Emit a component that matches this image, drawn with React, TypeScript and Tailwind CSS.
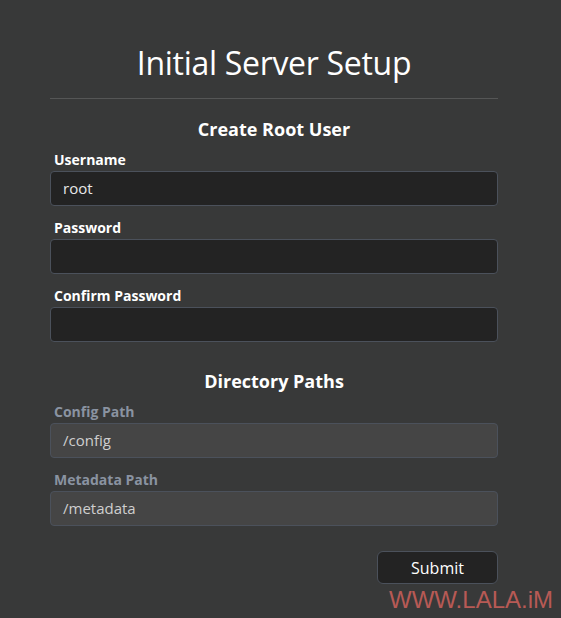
import React from 'react'

const font = { fontFamily: '"Open Sans", "Noto Sans", sans-serif' }

function Field({ label, value, muted }: { label: string; value?: string; muted?: boolean }) {
  return (
    <div className="flex flex-col">
      <label className={`pl-1 text-[14px] font-bold leading-[20px] ${muted ? 'text-[#8a93a1]' : 'text-white'}`}>
        {label}
      </label>
      <div
        className={`mt-[1px] h-[35px] rounded-[4px] border border-[#4b515b] px-3 flex items-center text-[15px] ${
          muted ? 'bg-[#454545] text-[#cfcfcf]' : 'bg-[#232323] text-[#e8e8e8]'
        }`}
      >
        {value}
      </div>
    </div>
  )
}

export default function App() {
  return (
    <div className="relative min-h-[618px] w-full bg-[#383939] text-white" style={font}>
      <div className="ml-[50px] w-[448px] pt-[40px]">
        <h1 className="text-center text-[32px] leading-[46px] tracking-[-0.3px]">Initial Server Setup</h1>
        <div className="mt-[12px] h-px bg-[#555656]" />

        <h2 className="mt-[18px] text-center text-[18px] font-bold leading-[24px]">Create Root User</h2>
        <div className="mt-[9px] flex flex-col gap-[12px]">
          <Field label="Username" value="root" />
          <Field label="Password" />
          <Field label="Confirm Password" />
        </div>

        <h2 className="mt-[27px] text-center text-[18px] font-bold leading-[24px]">Directory Paths</h2>
        <div className="mt-[9px] flex flex-col gap-[12px]">
          <Field label="Config Path" value="/config" muted />
          <Field label="Metadata Path" value="/metadata" muted />
        </div>

        <div className="mt-[25px] flex justify-end">
          <button className="h-[33px] w-[121px] rounded-[6px] border border-[#4b515b] bg-[#232323] text-[16px] text-white">
            Submit
          </button>
        </div>
      </div>

      <div
        className="absolute right-[8px] bottom-[4px] text-[24px] leading-[28px] text-[#b75a55]"
        style={{ fontFamily: '"Liberation Sans", Arial, sans-serif' }}
      >
        WWW.LALA.iM
      </div>
    </div>
  )
}
